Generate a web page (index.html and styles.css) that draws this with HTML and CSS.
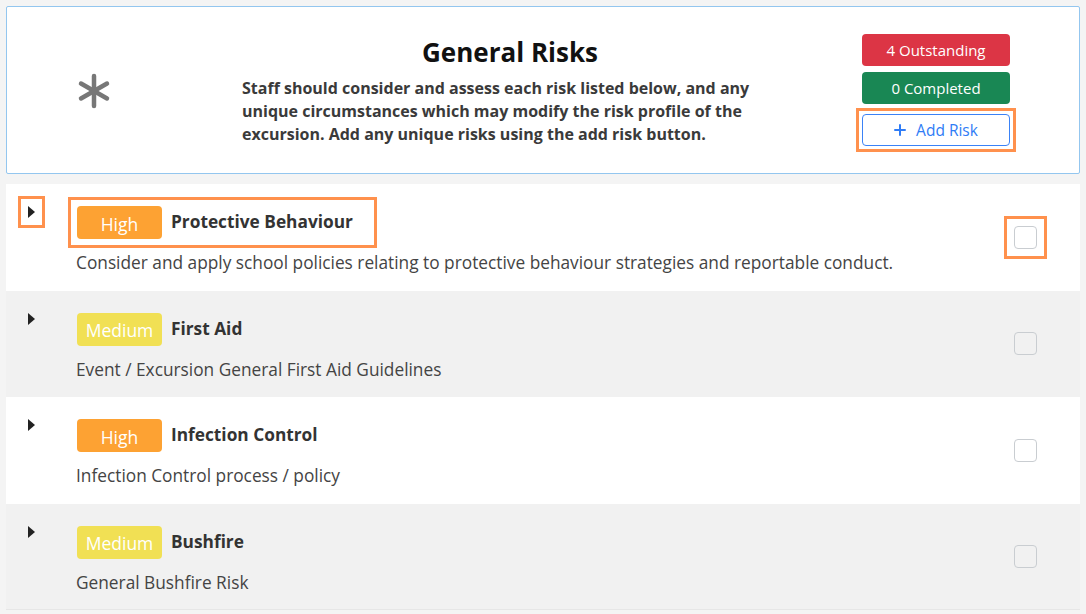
FILE: index.html
```html
<!DOCTYPE html>
<html lang="en">
<head>
<meta charset="utf-8">
<title>General Risks</title>
<link rel="stylesheet" href="styles.css">
</head>
<body>
<div class="page">
  <section class="header">
    <div class="icon-col">
      <svg class="asterisk" width="34" height="36" viewBox="0 0 34 36" aria-hidden="true">
        <g stroke="#777" stroke-width="4.5" stroke-linecap="round">
          <line x1="17" y1="3" x2="17" y2="33"/>
          <line x1="4" y1="10.5" x2="30" y2="25.5"/>
          <line x1="30" y1="10.5" x2="4" y2="25.5"/>
        </g>
      </svg>
    </div>
    <div class="text-col">
      <h1 class="title">General Risks</h1>
      <p class="intro">Staff should consider and assess each risk listed below, and any unique circumstances which may modify the risk profile of the excursion. Add any unique risks using the add risk button.</p>
    </div>
    <div class="btn-col">
      <div class="btn btn-red">4 Outstanding</div>
      <div class="btn btn-green">0 Completed</div>
      <div class="hl hl-add"><div class="btn btn-outline"><svg class="plus" width="12" height="12" viewBox="0 0 12 12" aria-hidden="true"><path d="M6 1v10M1 6h10" stroke="#2f7cf6" stroke-width="2" stroke-linecap="round"/></svg>Add Risk</div></div>
    </div>
  </section>

  <section class="rows">
    <div class="row row-white">
      <div class="caret-col"><span class="hl hl-caret"><span class="caret"></span></span></div>
      <div class="content">
        <div class="head hl hl-head"><span class="badge badge-high">High</span><span class="name">Protective Behaviour</span></div>
        <div class="desc">Consider and apply school policies relating to protective behaviour strategies and reportable conduct.</div>
      </div>
      <div class="check-col"><span class="hl hl-check"><span class="check"></span></span></div>
    </div>
    <div class="row row-grey">
      <div class="caret-col"><span class="nohl-caret"><span class="caret"></span></span></div>
      <div class="content">
        <div class="head"><span class="badge badge-medium">Medium</span><span class="name">First Aid</span></div>
        <div class="desc">Event / Excursion General First Aid Guidelines</div>
      </div>
      <div class="check-col"><span class="check"></span></div>
    </div>
    <div class="row row-white">
      <div class="caret-col"><span class="nohl-caret"><span class="caret"></span></span></div>
      <div class="content">
        <div class="head"><span class="badge badge-high">High</span><span class="name">Infection Control</span></div>
        <div class="desc">Infection Control process / policy</div>
      </div>
      <div class="check-col"><span class="check"></span></div>
    </div>
    <div class="row row-grey">
      <div class="caret-col"><span class="nohl-caret"><span class="caret"></span></span></div>
      <div class="content">
        <div class="head"><span class="badge badge-medium">Medium</span><span class="name">Bushfire</span></div>
        <div class="desc">General Bushfire Risk</div>
      </div>
      <div class="check-col"><span class="check"></span></div>
    </div>
  </section>
</div>
</body>
</html>
```

FILE: styles.css
```css
* { box-sizing: border-box; }
html, body { margin: 0; padding: 0; }
body {
  background: #f4f4f4;
  font-family: "Open Sans", "Liberation Sans", sans-serif;
  color: #333;
}
.page { padding: 6px; }

.header {
  display: flex;
  align-items: flex-start;
  height: 168px;
  background: #fff;
  border: 1px solid #93c6ef;
  border-radius: 2px;
}
.icon-col {
  width: 173px;
  height: 100%;
  display: flex;
  align-items: center;
  justify-content: center;
}
.asterisk { display: block; margin-top: 2px; }
.text-col {
  margin-left: 62px;
  width: 536px;
  padding-top: 29px;
}
.title {
  margin: 0;
  text-align: center;
  font-size: 26px;
  line-height: 32px;
  font-weight: 700;
  color: #111;
}
.intro {
  margin: 9px 0 0;
  font-size: 16px;
  line-height: 23px;
  font-weight: 700;
  color: #3a3a3a;
}
.btn-col {
  margin-left: 84px;
  width: 148px;
  padding-top: 27px;
  display: flex;
  flex-direction: column;
  gap: 6px;
}
.btn {
  height: 32px;
  border-radius: 4px;
  display: flex;
  align-items: center;
  justify-content: center;
  font-size: 15px;
  color: #fff;
}
.btn-red { background: #dc3545; }
.btn-green { background: #198754; }
.btn-outline {
  background: #fff;
  color: #2f7cf6;
  border: 1px solid #3b82f6;
  font-size: 15.5px;
}
.plus {
  display: block;
  margin-right: 10px;
}

.hl { outline: 3px solid #ff914d; }
.hl-add { margin-top: 4px; outline-offset: 3px; }

.rows { margin-top: 10px; }
.row {
  display: flex;
  align-items: flex-start;
  height: 106.5px;
  padding-top: 22px;
}
.row-white { background: #fff; }
.row-grey { background: #f1f1f1; }
.rows .row:last-child { border-bottom: 1px solid #e6e6e6; }

.caret-col {
  width: 71px;
  padding-left: 22px;
  display: flex;
}
.hl-caret, .nohl-caret {
  display: inline-flex;
  width: 7px;
  height: 12px;
}
.hl-caret { outline-offset: 7px; }
.caret {
  width: 0;
  height: 0;
  border-top: 6px solid transparent;
  border-bottom: 6px solid transparent;
  border-left: 7px solid #222;
}
.content { flex: 1; margin-left: -1px; }
.head {
  display: inline-flex;
  align-items: center;
  gap: 9px;
  padding-right: 15px;
  margin-left: 1px;
}
.hl-head { outline-offset: 6px; }
.badge {
  width: 85px;
  height: 33px;
  border-radius: 4px;
  display: inline-flex;
  align-items: center;
  justify-content: center;
  color: #fff;
  font-size: 17.5px;
  padding-top: 2px;
}
.badge-high { background: #fda233; }
.badge-medium { background: #f1e054; }
.name {
  font-size: 17.3px;
  font-weight: 700;
  color: #333;
  margin-top: -2px;
}
.desc {
  margin-top: 12px;
  font-size: 17.3px;
  line-height: 24px;
  color: #444;
}
.check-col {
  align-self: center;
  margin-top: -22px;
  width: 66px;
  display: flex;
}
.check {
  display: block;
  width: 23px;
  height: 23px;
  border: 1px solid #c9cdd1;
  border-radius: 4px;
  background: #fff;
}
.row-grey .check { background: #f1f1f1; }
.hl-check { display: block; outline-offset: 7px; }
```
